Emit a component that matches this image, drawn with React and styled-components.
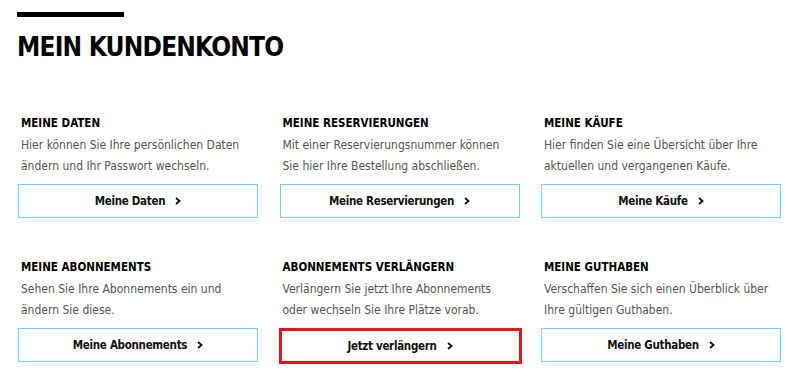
import React from "react";
import styled, { createGlobalStyle } from "styled-components";

const Global = createGlobalStyle`
  html, body { margin: 0; padding: 0; background: #fff; }
  body { font-family: "DejaVu Sans Condensed", "DejaVu Sans", sans-serif; color: #111; }
  * { box-sizing: border-box; }
`;

const Page = styled.main`
  padding: 12px 19px 0 18px;
  width: 800px;
`;

const Bar = styled.div`
  width: 107px;
  height: 5px;
  margin-left: -1px;
  background: #000;
`;

const Title = styled.h1`
  margin: 14px 0 0 -1px;
  font-family: "DejaVu Sans Condensed", "DejaVu Sans", sans-serif;
  font-weight: 700;
  font-size: 26px;
  line-height: 32px;
  letter-spacing: -0.8px;
  text-transform: uppercase;
  color: #000;
`;

const Grid = styled.section`
  display: grid;
  width: 763px;
  grid-template-columns: repeat(3, 1fr);
  column-gap: 21.5px;
  row-gap: 41px;
  margin-top: 52px;
`;

const Card = styled.article`
  display: flex;
  flex-direction: column;
`;

const CardTitle = styled.h2`
  margin: 0 0 4px 3px;
  font-family: "DejaVu Sans Condensed", "DejaVu Sans", sans-serif;
  font-weight: 700;
  font-size: 11.5px;
  line-height: 16px;
  text-transform: uppercase;
  color: #000;
`;

const Text = styled.p`
  margin: 0 0 7px 3px;
  max-width: 228px;
  font-family: "DejaVu Sans Condensed", "DejaVu Sans", sans-serif;
  font-size: 12px;
  line-height: 21px;
  color: #555;
  height: 42px;
`;

const Button = styled.a`
  display: flex;
  align-items: center;
  justify-content: center;
  gap: 10px;
  height: ${(p) => (p.$highlight ? "36px" : "34px")};
  border: ${(p) => (p.$highlight ? "3px solid #e8141c" : "1px solid #6dd4fb")};
  margin: ${(p) => (p.$highlight ? "0 -2px 0 -1px" : "0")};
  font-family: "DejaVu Sans Condensed", "DejaVu Sans", sans-serif;
  font-weight: 700;
  font-size: 11.5px;
  letter-spacing: -0.3px;
  color: #111;
  text-decoration: none;
  cursor: pointer;
  background: #fff;
`;

const Chevron = () => (
  <svg width="6" height="8" viewBox="0 0 6 8" aria-hidden="true">
    <path d="M1 1 L4.5 4 L1 7" fill="none" stroke="#111" strokeWidth="1.8" />
  </svg>
);

const items = [
  {
    title: "Meine Daten",
    text: "Hier können Sie Ihre persönlichen Daten ändern und Ihr Passwort wechseln.",
    button: "Meine Daten",
  },
  {
    title: "Meine Reservierungen",
    text: "Mit einer Reservierungsnummer können Sie hier Ihre Bestellung abschließen.",
    button: "Meine Reservierungen",
  },
  {
    title: "Meine Käufe",
    text: "Hier finden Sie eine Übersicht über Ihre aktuellen und vergangenen Käufe.",
    button: "Meine Käufe",
  },
  {
    title: "Meine Abonnements",
    text: "Sehen Sie Ihre Abonnements ein und ändern Sie diese.",
    button: "Meine Abonnements",
  },
  {
    title: "Abonnements verlängern",
    text: "Verlängern Sie jetzt Ihre Abonnements oder wechseln Sie Ihre Plätze vorab.",
    button: "Jetzt verlängern",
    highlight: true,
  },
  {
    title: "Meine Guthaben",
    text: "Verschaffen Sie sich einen Überblick über Ihre gültigen Guthaben.",
    button: "Meine Guthaben",
  },
];

export default function App() {
  return (
    <>
      <Global />
      <Page>
        <Bar />
        <Title>Mein Kundenkonto</Title>
        <Grid>
          {items.map((it) => (
            <Card key={it.title}>
              <CardTitle>{it.title}</CardTitle>
              <Text>{it.text}</Text>
              <Button $highlight={it.highlight}>
                <span>{it.button}</span>
                <Chevron />
              </Button>
            </Card>
          ))}
        </Grid>
      </Page>
    </>
  );
}
